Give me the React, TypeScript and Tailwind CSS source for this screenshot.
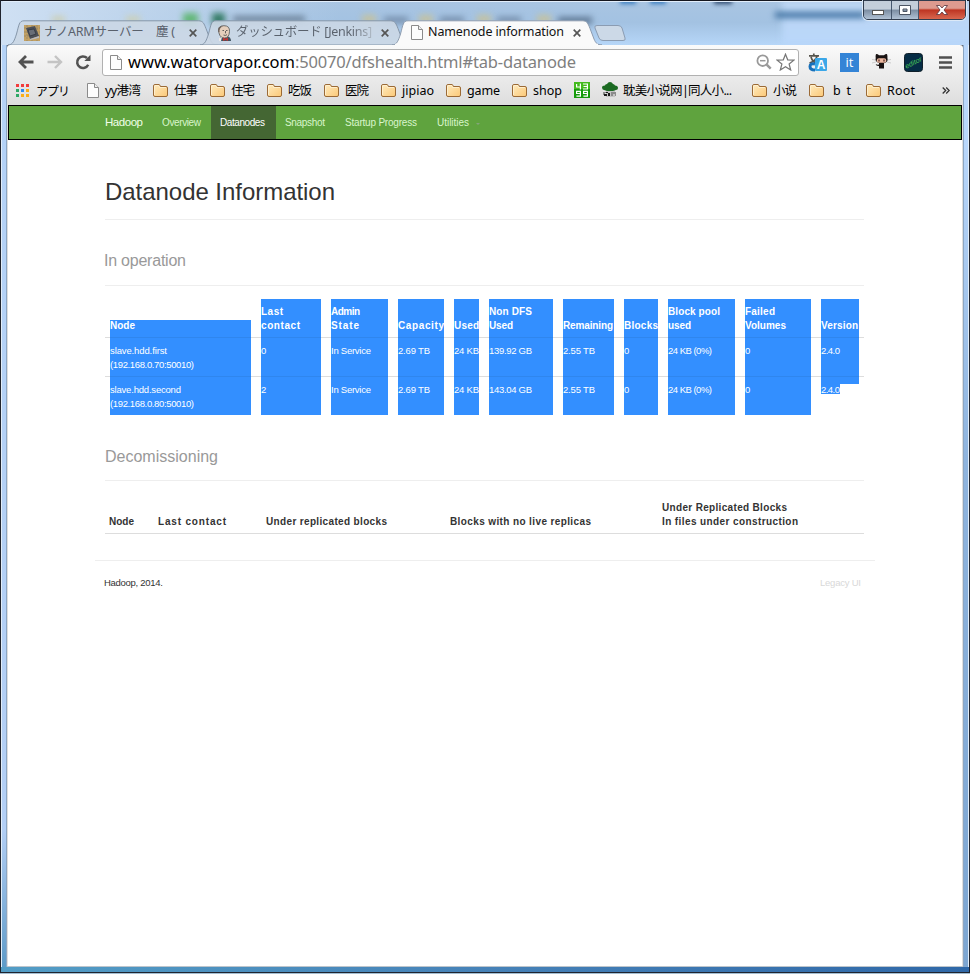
import React, { useLayoutEffect, useRef, useState } from "react";

/** Text on one line, tracked so that it fills exactly `w` pixels. */
function Fit({ w, children, className = "" }: { w: number; children: string; className?: string }) {
  const ref = useRef<HTMLSpanElement>(null);
  const [tracking, setTracking] = useState(0);
  useLayoutEffect(() => {
    if (!ref.current) return;
    const natural = ref.current.getBoundingClientRect().width;
    setTracking((w - natural) / Math.max(1, children.length - 1));
  }, [w, children]);
  return (
    <span className={`block shrink-0 ${className}`} style={{ width: w }}>
      <span ref={ref} className="inline-block whitespace-pre" style={{ letterSpacing: tracking }}>
        {children}
      </span>
    </span>
  );
}

const PageIcon = ({ className = "" }: { className?: string }) => (
  <svg viewBox="0 0 12 15" className={`h-[15px] w-3 shrink-0 ${className}`}>
    <path d="M.5.5h7l4 4v10H.5z" fill="#fdfdfd" stroke="#8b8b8b" />
    <path d="M7.5.5v4h4" fill="#eee" stroke="#8b8b8b" />
  </svg>
);

const FolderIcon = () => (
  <svg viewBox="0 0 15 13" className="-mt-0.5 h-[13px] w-[15px] shrink-0">
    <defs>
      <linearGradient id="folder" x1="0" y1="0" x2="1" y2="1">
        <stop offset="0" stopColor="#ffecc0" />
        <stop offset="1" stopColor="#fbc877" />
      </linearGradient>
    </defs>
    <path d="M.5 11V2Q.5.5 2 .5h4Q7 .5 7.300 2.500H13q1.500 0 1.500 1.500v7q0 1.500-1.500 1.500H2Q.5 12.500.5 11z" fill="url(#folder)" stroke="#9b6a36" />
    <path d="M1.500 11V2.200q0-.7.7-.7h3.600l.8 2H13" fill="none" stroke="#fff3d6" strokeWidth=".8" />
  </svg>
);

const AppsIcon = () => (
  <svg viewBox="0 0 13 13" className="-mt-0.5 h-[13px] w-[13px] shrink-0">
    {["#f23c3c", "#f23c3c", "#f23c3c", "#2fa866", "#2b8cf0", "#fbae17", "#2fa866", "#fbae17", "#fbae17"].map((c, i) => (
      <rect key={i} x={(i % 3) * 5} y={Math.floor(i / 3) * 5} width="3" height="3" fill={c} />
    ))}
  </svg>
);

const Icon4399 = () => (
  <svg viewBox="0 0 16 16" className="-mt-0.5 h-4 w-4 shrink-0">
    <rect width="16" height="16" fill="#159b0b" />
    <rect width="16" height="7" fill="#43ba1d" />
    <g fill="none" stroke="#fff" strokeWidth="1.200">
      <path d="M2.600 2v3h4.400M6.400 1.500v6M9 2h4.400v5H9M9.500 4.500h4" />
      <path d="M6.400 11.500H2.600V9.400H6.400v4.800H2.400M13.400 11.500H9.600V9.400H13.400v4.800H9.400" />
    </g>
  </svg>
);

const TreeIcon = () => (
  <svg viewBox="0 0 16 16" className="-mt-0.5 h-4 w-4 shrink-0">
    <path d="M4 7h9v8H4z" fill="#c4c4c4" />
    <path d="M0 5.500q0-2 3-2 0-1.500 2-1.500Q6 0 8 0t3 2q1.500 0 2 1.500 3 0 3 2.500 0 2-2 2l-3 1H5L2 8Q0 7.500 0 5.500z" fill="#1b6a22" />
    <path d="M1 10h4v1H3v2H1zM9 10h5v4h-1v-2h-2v2H9z" fill="#8c8c8c" />
    <path d="M2 12h3v2H2zM6 11h2v3H6zM4 10h2v1H4z" fill="#1a1a1a" />
  </svg>
);

const ChipIcon = () => (
  <svg viewBox="0 0 16 16" className="h-4 w-4 shrink-0">
    <rect width="16" height="16" fill="#c3a163" />
    <path d="M0 3h16M0 7h16M0 11h16M3 0v16M8 0v16M13 0v16" stroke="#8d8064" strokeWidth=".7" strokeDasharray="2 1" />
    <path d="m2 3 9-2 4 10-9 3z" fill="#4b4f57" />
    <path d="m4 5 6-1 2 5-6 2z" fill="#696e77" stroke="#2e3239" strokeWidth=".7" />
    <path d="m6 14 9-3v2l-9 2z" fill="#b9bac0" />
  </svg>
);

const JenkinsIcon = () => (
  <svg viewBox="0 0 16 16" className="h-4 w-4 shrink-0">
    <path d="M3 16q0-4 4-5h4q4 1 4 5z" fill="#40535f" />
    <path d="M2.500 6Q2 .7 8 .7t5.500 6Q13 13 8.500 13T3 8z" fill="#e5cfbd" stroke="#555" strokeWidth=".8" />
    <path d="M2.300 7Q1 1 7 1q-4 2-3.500 6z" fill="#6d625c" />
    <path d="M6.500 5.500h1.500M10 5.500h1.500M7.500 10q2 1 3.500-.3M9.500 6v2.300" stroke="#444" strokeWidth=".8" fill="none" />
    <path d="m7 12.500 2.500 1.200 2.500-1.200V16l-2.500-1L7 16z" fill="#bd3535" />
    <path d="M3 13l3-1-1 4H3z" fill="#e9e9e9" />
  </svg>
);

const CloseX = () => (
  <svg viewBox="0 0 8 8" className="h-2 w-2 shrink-0">
    <path d="m.7.7 6.600 6.600M7.300.7.7 7.300" stroke="#555" strokeWidth="1.700" />
  </svg>
);

function Tab({ active = false, className = "", children }: { active?: boolean; className?: string; children: React.ReactNode }) {
  return (
    <div className={`relative flex h-[25px] w-[210px] shrink-0 items-center ${active ? "z-10" : ""} ${className}`}>
      <svg viewBox="0 0 210 25" className="absolute inset-0 h-[25px] w-[210px]">
        <path
          d="M0 25C5 25 6.500 20 8.500 14 11 5 11 .8 16 .8H190.500C195 .8 196 3.500 198 8.500L202 19C204 23.500 205 24.500 210 25z"
          fill={active ? "#fafafa" : "#cbd7e4"}
          fillOpacity={active ? 1 : 0.9}
          stroke={active ? "#8d9caf" : "#8596a9"}
        />
        {active && <path d="M3 25h203" stroke="#fafafa" strokeWidth="2.500" />}
      </svg>
      <div className="relative flex h-full w-full items-center">{children}</div>
    </div>
  );
}

function TitleBar() {
  return (
    <div className="relative h-[45px] shrink-0 overflow-hidden bg-linear-to-b from-[#a9c5e2] via-[#a3c2e2] to-[#b6d6f8]">
      <div className="absolute inset-0 bg-linear-to-r from-[#cfe0f3] from-0% via-transparent via-35% to-transparent" />
      <div className="absolute top-0 right-[-10px] h-full w-[198px] bg-linear-to-b from-[#bdd6f2] to-[#b9d7fb] blur-[3px]" />
      <div className="absolute top-[12px] left-[775px] h-[6px] w-[90px] bg-[#3c6f9f] blur-[3px]" />
      <div className="absolute top-[16px] left-[52px] h-[7px] w-[13px] bg-[#cbd0b9] blur-[3px]" />
      <div className="absolute top-[16px] left-[126px] h-[7px] w-[14px] bg-[#cbd0b9] blur-[3px]" />
      <div className="absolute top-[13px] left-[183px] h-[12px] w-[15px] bg-[#62b777] blur-[3px]" />
      <div className="absolute top-[13px] left-[212px] h-[12px] w-[13px] bg-[#347b65] blur-[3px]" />
      <div className="absolute top-[16px] left-[233px] h-[6px] w-[72px] bg-[#6b8198] blur-[3px]" />
      <div className="absolute top-[15px] left-[362px] h-[8px] w-[14px] bg-[#c4c2a0] blur-[3px]" />
      <div className="absolute top-[17px] left-[384px] h-[6px] w-[24px] bg-[#748ca9] blur-[3px]" />
      <div className="absolute top-[15px] left-[419px] h-[8px] w-[14px] bg-[#c4c2a0] blur-[3px]" />
      <div className="absolute top-[17px] left-[440px] h-[6px] w-[24px] bg-[#748ca9] blur-[3px]" />
      <div className="absolute top-[15px] left-[477px] h-[8px] w-[14px] bg-[#c4c2a0] blur-[3px]" />
      <div className="absolute top-[17px] left-[497px] h-[6px] w-[24px] bg-[#748ca9] blur-[3px]" />
      <div className="absolute top-[15px] left-[537px] h-[8px] w-[14px] bg-[#c4c2a0] blur-[3px]" />
      <div className="absolute top-[17px] left-[558px] h-[7px] w-[34px] bg-[#5f7894] blur-[3px]" />
      <div className="absolute top-[-3px] left-[620px] h-[7px] w-[16px] bg-[#3d7fc0] blur-[2px]" />
      <div className="absolute top-[-3px] left-[650px] h-[7px] w-[16px] bg-[#3d7fc0] blur-[2px]" />
      <div className="absolute top-[-3px] left-[714px] h-[7px] w-[18px] bg-[#2f4b70] blur-[2px]" />
      <div className="absolute inset-x-0 top-0 h-px bg-[#15171f]" />
      <div className="absolute inset-x-[3px] top-px h-px bg-[#e2eefb]" />
      <div className="absolute top-0 bottom-0 left-0 w-px bg-[#20242e]" />
      <div className="absolute top-0 right-0 bottom-0 w-px bg-[#20242e]" />

      <div className="relative flex pt-5 pl-2 font-['Noto_Sans','Noto_Sans_CJK_JP',sans-serif] text-[12.5px] leading-[18px]">
        <Tab>
          <div className="flex items-center pl-4">
            <ChipIcon />
            <Fit w={131} className="-mt-px ml-[4px] text-[#59616c]">ナノARMサーバー　塵 (</Fit>
          </div>
          <div className="ml-[14px]"><CloseX /></div>
        </Tab>
        <Tab className="-ml-[18px]">
          <div className="flex items-center pl-4">
            <JenkinsIcon />
            <Fit w={136} className="-mt-px ml-1 bg-linear-to-r from-[#59616c] from-85% to-[#b0bac5] bg-clip-text text-transparent">ダッシュボード [Jenkins]</Fit>
          </div>
          <div className="ml-[9px]"><CloseX /></div>
        </Tab>
        <Tab active className="-ml-[18px]">
          <div className="flex items-center pl-[19px]">
            <PageIcon />
            <Fit w={136} className="-mt-px ml-[5px] text-[#111]">Namenode information</Fit>
          </div>
          <div className="ml-[9px]"><CloseX /></div>
        </Tab>
        <svg viewBox="0 0 32 17" className="-ml-[8px] mt-[5px] h-[17px] w-8 shrink-0">
          <path d="M3 .5h21q3 0 4 2.500l3 10q1 2.500-2 2.500H9q-3 0-4-2.500L1 3Q0 .5 3 .5z" fill="#ccd9e7" stroke="#8b9cb2" />
        </svg>
      </div>

      <div className="absolute top-0 left-[863px] flex h-[20px] w-[103px] overflow-hidden rounded-b-[5px] border border-[#303c4d] shadow-[0_0_0_1px_#dce9f7]">
        <div className="flex w-[28px] items-center justify-center border-r border-[#46576d] bg-linear-to-b from-[#c3ceda] from-45% via-[#7b8da2] via-50% to-[#b1c2d5]">
          <div className="mt-[4px] h-[5px] w-[12px] border border-[#555] bg-white" />
        </div>
        <div className="flex w-[27px] items-center justify-center border-r border-[#46576d] bg-linear-to-b from-[#c3ceda] from-45% via-[#7b8da2] via-50% to-[#b1c2d5]">
          <svg viewBox="0 0 12 10" className="h-[10px] w-3">
            <path d="M.5.5h11v9H.5zM4 4v2.500h4V4z" fill="#fff" stroke="#4c5563" fillRule="evenodd" />
          </svg>
        </div>
        <div className="flex flex-1 items-center justify-center bg-linear-to-b from-[#dd9b8f] from-40% via-[#bd3422] via-50% to-[#d8664e]">
          <svg viewBox="0 0 12 10" className="h-[10px] w-3">
            <path d="M.5.500h3.300L6 3 8.200.5h3.300L8 5l3.500 4.500H8.200L6 7 3.800 9.500H.5L4 5z" fill="#fff" stroke="#563139" strokeWidth=".8" />
          </svg>
        </div>
      </div>
    </div>
  );
}

function Toolbar() {
  return (
    <div className="flex h-[33px] items-center pt-[2px] pb-px pl-[11px]">
      <svg viewBox="0 0 16 14" className="h-[14px] w-4 shrink-0">
        <path d="M15.500 7H3M8 1 2 7l6 6" fill="none" stroke="#525252" strokeWidth="2.800" />
      </svg>
      <svg viewBox="0 0 16 14" className="ml-[13px] h-[14px] w-4 shrink-0">
        <path d="M.5 7H13M8 1l6 6-6 6" fill="none" stroke="#c4c4c4" strokeWidth="2.400" />
      </svg>
      <svg viewBox="0 0 16 16" className="ml-[12px] h-4 w-4 shrink-0">
        <path d="M13.200 10.700A5.800 5.800 0 1 1 12 4" fill="none" stroke="#525252" strokeWidth="2.500" />
        <path d="M15.500.8V7H9.300z" fill="#525252" />
      </svg>
      <div className="mt-px ml-[11px] flex h-[27px] w-[697px] shrink-0 items-center rounded-[3px] border border-[#b1b1b1] bg-white pl-[7px]">
        <PageIcon />
        <div className="-mt-px ml-[6px] flex font-['Noto_Sans',sans-serif] text-[16.5px] leading-[24px]">
          <Fit w={167} className="text-black">www.watorvapor.com</Fit>
          <Fit w={281} className="text-[#808080]">:50070/dfshealth.html#tab-datanode</Fit>
        </div>
        <svg viewBox="0 0 16 16" className="-mt-px ml-[180px] h-4 w-4 shrink-0">
          <circle cx="6.700" cy="6.700" r="5.300" fill="none" stroke="#999" strokeWidth="1.800" />
          <path d="M4 6.700h5.500" stroke="#999" strokeWidth="1.500" />
          <path d="m10.700 10.700 4 4" stroke="#999" strokeWidth="2.500" />
        </svg>
        <svg viewBox="0 0 19 18" className="-mt-px ml-[4px] h-[18px] w-[19px] shrink-0">
          <path d="m9.500 1.200 2.200 5.600 6.200.3-4.800 3.900 1.600 6-5.200-3.300L4.300 17l1.600-6L1.100 7.100l6.200-.3z" fill="#fff" stroke="#777" strokeWidth="1.200" />
        </svg>
      </div>
      <svg viewBox="0 0 19 19" className="ml-[9px] h-[19px] w-[19px] shrink-0">
        <path d="M1 2.800h10M5.800.5v2M3 4q1.500 5.500 7 7M9 3.500q-2 5-7.500 6.500" fill="none" stroke="#55534c" strokeWidth="1.700" />
        <path d="M7 11q-5-1-5 2.500T7 17" fill="none" stroke="#1870ba" strokeWidth="3" />
        <rect x="7" y="5" width="12" height="13" rx="1" fill="#3ba7e8" />
        <text x="13" y="16" textAnchor="middle" fontSize="12" fontWeight="bold" fill="#fff" fontFamily="Liberation Sans, sans-serif">A</text>
      </svg>
      <div className="ml-[13px] flex h-[19px] w-[19px] shrink-0 items-center justify-center bg-[#3484d6] font-['Open_Sans',sans-serif] text-[13px] leading-[18px] text-white">it</div>
      <svg viewBox="0 0 19 17" className="-mt-0.5 ml-[13px] h-[17px] w-[19px] shrink-0">
        <path d="M0 6.500 4 7M0 10l4-1M19 6.500 15 7M19 10l-4-1" stroke="#bbb" strokeWidth=".7" />
        <path d="M4 1q2 0 3 1.200h5Q13 1 15 1q.7 2 .4 3.500Q16.500 9 12 10.200v5.300H7V13q-3 .3-3.300-2 2 1.500 3.300.3V10Q3 9 3.700 4.500 3.300 3 4 1z" fill="#181212" />
        <rect x="4.800" y="5.200" width="9.500" height="4.600" rx="2.200" fill="#edb8a0" />
        <path d="M7 6.500v2M12 6.500v2" stroke="#54312b" strokeWidth="1.300" />
      </svg>
      <svg viewBox="0 0 19 19" className="ml-[13px] h-[19px] w-[19px] shrink-0">
        <rect x=".5" y=".5" width="18" height="18" rx="3" fill="#052c45" stroke="#10202b" />
        <text x="9.500" y="12" textAnchor="middle" fontSize="7" fill="#4bc65a" fontFamily="Liberation Sans, sans-serif" fontStyle="italic" textLength="18" transform="rotate(-27 9.500 10)">editor</text>
      </svg>
      <svg viewBox="0 0 13 13" className="ml-4 h-[13px] w-[13px] shrink-0">
        <path d="M0 1.500h13M0 6.500h13M0 11.500h13" stroke="#505050" strokeWidth="2.600" />
      </svg>
    </div>
  );
}

const Folder = ({ gap, label, w, textGap = "ml-[6px]" }: { gap: string; label: string; w: number; textGap?: string }) => (
  <div className={`flex shrink-0 items-center ${gap}`}>
    <FolderIcon />
    <Fit w={w} className={textGap}>{label}</Fit>
  </div>
);

function Bookmarks() {
  return (
    <div className="flex h-[26px] items-center pl-[9px] font-['Noto_Sans','Noto_Sans_CJK_SC',sans-serif] text-[12.5px] leading-[18px] text-black">
      <AppsIcon />
      <Fit w={34} className="ml-[7px] font-['Noto_Sans_CJK_JP',sans-serif] text-[12px]">アプリ</Fit>
      <PageIcon className="-mt-0.5 ml-[17px]" />
      <Fit w={36} className="ml-[6px]">yy港湾</Fit>
      <Folder gap="ml-[12px]" label="仕事" w={24} />
      <Folder gap="ml-[12px]" label="住宅" w={24} />
      <Folder gap="ml-[12px]" label="吃饭" w={24} />
      <Folder gap="ml-[12px]" label="医院" w={24} />
      <Folder gap="ml-[12px]" label="jipiao" w={32} />
      <Folder gap="ml-[12px]" label="game" w={33} />
      <Folder gap="ml-[12px]" label="shop" w={29} />
      <div className="ml-[12px]"><Icon4399 /></div>
      <div className="ml-[12px]"><TreeIcon /></div>
      <Fit w={109} className="ml-[5px]">耽美小说网|同人小...</Fit>
      <Folder gap="ml-[20px]" label="小说" w={24} />
      <Folder gap="ml-[12px]" label="b t" w={18} textGap="ml-[9px]" />
      <Folder gap="ml-[15px]" label="Root" w={28} />
      <svg viewBox="0 0 8 7" className="-mt-px ml-[27px] h-[7px] w-2 shrink-0">
        <path d="m.7.5 3 3-3 3M4.200.5l3 3-3 3" fill="none" stroke="#333" strokeWidth="1.300" />
      </svg>
    </div>
  );
}

function NavBar() {
  return (
    <div className="flex h-[35px] shrink-0 border border-black bg-[#5fa33e] pl-24 text-[10px] leading-[14px] text-[#d9f5cb]">
      <div className="flex items-center pb-px"><Fit w={38} className="text-[11.5px] text-[#f1ffe9]">Hadoop</Fit></div>
      <div className="ml-[19px] flex items-center pt-px"><Fit w={39}>Overview</Fit></div>
      <div className="ml-[10px] flex w-[65px] items-center bg-[#446633] pt-px pl-[9px] text-white"><Fit w={45}>Datanodes</Fit></div>
      <div className="ml-[9px] flex items-center pt-px"><Fit w={40}>Snapshot</Fit></div>
      <div className="ml-[20px] flex items-center pt-px"><Fit w={72}>Startup Progress</Fit></div>
      <div className="ml-[20px] flex items-center pt-px"><Fit w={32}>Utilities</Fit></div>
      <div className="mt-[17px] ml-[7px] h-0 border-x-2 border-t-2 border-x-transparent border-t-[#83a57a]" />
    </div>
  );
}

type Cell = [string, number];
const HEAD: Cell[][] = [
  [["Node", 25]],
  [["Last", 22], ["contact", 39]],
  [["Admin", 29], ["State", 28]],
  [["Capacity", 46]],
  [["Used", 25]],
  [["Non DFS", 43], ["Used", 24]],
  [["Remaining", 50]],
  [["Blocks", 34]],
  [["Block pool", 52], ["used", 23]],
  [["Failed", 30], ["Volumes", 41]],
  [["Version", 37]],
];
const ROWS: Cell[][][] = [
  [[["slave.hdd.first", 57], ["(192.168.0.70:50010)", 84]], [["0", 5]], [["In Service", 40]], [["2.69 TB", 32]], [["24 KB", 25]], [["139.92 GB", 43]], [["2.55 TB", 32]], [["0", 5]], [["24 KB (0%)", 44]], [["0", 5]], [["2.4.0", 19]]],
  [[["slave.hdd.second", 71], ["(192.168.0.80:50010)", 84]], [["2", 5]], [["In Service", 40]], [["2.69 TB", 32]], [["24 KB", 25]], [["143.04 GB", 43]], [["2.55 TB", 32]], [["0", 5]], [["24 KB (0%)", 44]], [["0", 5]], [["2.4.0", 19]]],
];
const COLS = "grid grid-cols-[141px_60px_57px_46px_25px_64px_51px_34px_67px_66px_38px] gap-x-[10px] px-[5px]";

const Lines = ({ cell }: { cell: Cell[] }) => (
  <>
    {cell.map(([text, w]) => (
      <Fit key={text} w={w}>{text}</Fit>
    ))}
  </>
);

function NodeTable() {
  return (
    <div className="mt-[13px] w-[759px] text-[9.5px] leading-[14px] text-white">
      <div className={`${COLS} h-[38px] items-end text-[10px] font-bold`}>
        {HEAD.map((cell, i) => (
          <div key={i} className={`flex flex-col justify-end bg-[#338fff] pb-[4px] ${i === 0 ? "h-[17px]" : "h-[38px]"}`}>
            <Lines cell={cell} />
          </div>
        ))}
      </div>
      {ROWS.map((row, r) => (
        <div key={r} className={`${COLS} h-[39px] border-t border-[#ddd]`}>
          {row.map((cell, i) =>
            r === 1 && i === 10 ? (
              <div key={i} className="-mt-px h-[8px] border-t border-[#2f86ee] bg-[#338fff]">
                <div className="mt-[7px] h-[10px] w-[19px] bg-[#338fff]">
                  <div className="-translate-y-px"><Lines cell={cell} /></div>
                </div>
              </div>
            ) : (
              <div key={i} className="-mt-px h-[39px] border-t border-[#2f86ee] bg-[#338fff] pt-[6px]">
                <Lines cell={cell} />
              </div>
            ),
          )}
        </div>
      ))}
    </div>
  );
}

function Content() {
  return (
    <div className="flex-1 bg-white pl-[97px] font-['Liberation_Sans',Arial,sans-serif] text-[#333]">
      <div className="flex h-[80px] w-[759px] items-end border-b border-[#eee] pb-[12px] text-[24px] leading-[30px]">
        <Fit w={230}>Datanode Information</Fit>
      </div>
      <div className="flex h-[66px] w-[759px] items-end border-b border-[#eee] pb-[14px] text-[16px] leading-[20px] text-[#999]">
        <Fit w={82} className="-ml-px">In operation</Fit>
      </div>
      <NodeTable />
      <div className="flex h-[66px] w-[759px] items-end border-b border-[#eee] pb-[13px] text-[16px] leading-[20px] text-[#999]">
        <Fit w={113}>Decomissioning</Fit>
      </div>
      <div className="flex h-[53px] w-[759px] items-end border-b border-[#ddd] pb-[4px] pl-[4px] text-[10px] leading-[14px] font-bold">
        <Fit w={25}>Node</Fit>
        <Fit w={68} className="ml-6">Last contact</Fit>
        <Fit w={121} className="ml-10">Under replicated blocks</Fit>
        <Fit w={141} className="ml-[63px]">Blocks with no live replicas</Fit>
        <div className="ml-[71px]">
          <Fit w={125}>Under Replicated Blocks</Fit>
          <Fit w={136}>In files under construction</Fit>
        </div>
      </div>
      <div className="-ml-[10px] mt-[26px] flex w-[780px] justify-between border-t border-[#eee] pt-[15px] pr-[14px] pl-[9px] text-[9.5px] leading-[14px]">
        <Fit w={59}>Hadoop, 2014.</Fit>
        <Fit w={41} className="text-[#d8d8d8]">Legacy UI</Fit>
      </div>
    </div>
  );
}

export default function App() {
  return (
    <div className="flex h-[974px] w-[970px] flex-col overflow-hidden bg-[#15171f] font-['Liberation_Sans',Arial,sans-serif]">
      <TitleBar />
      <div className="flex min-h-0 flex-1">
        <div className="w-[7px] shrink-0 border-l border-[#20242e] bg-linear-to-b from-[#b5d3f7] via-[#b3cff5] via-85% to-[#5e9bc8] shadow-[inset_1px_0_#e2eefa,inset_-1px_0_#8ba6c4]" />
        <div className="flex w-[956px] shrink-0 flex-col rounded-t-[3px] bg-linear-to-b from-[#fafafa] to-[#dedede] to-[59px] shadow-[0_-1px_#8495a8]">
          <Toolbar />
          <Bookmarks />
          <div className="mx-px flex flex-1 flex-col border-t border-black/0">
            <NavBar />
            <Content />
          </div>
          <div className="h-px bg-[#bdc5cc]" />
        </div>
        <div className="flex-1 border-r border-[#20242e] bg-linear-to-b from-[#b9d7fb] from-10% via-[#8fb4de] via-45% to-[#7da6d2] shadow-[inset_1px_0_#8ba6c4,inset_-1px_0_#e2eefa]" />
      </div>
      <div className="h-[6px] shrink-0 border-x border-b border-[#20242e] bg-linear-to-r from-[#529dc6] via-[#4682b8] to-[#2f68a8]" />
      <div className="h-px shrink-0 bg-[#a5bfd2]" />
    </div>
  );
}
